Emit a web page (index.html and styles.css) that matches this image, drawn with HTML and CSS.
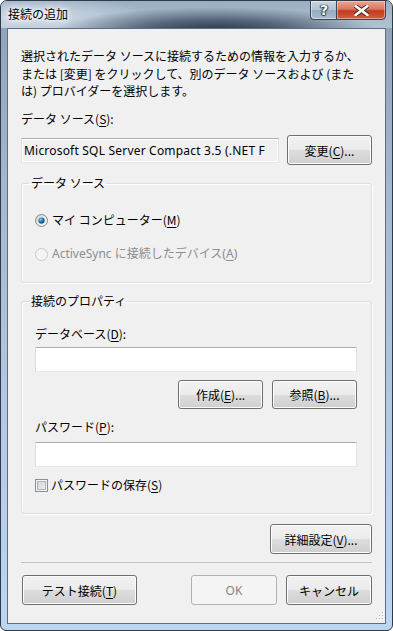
FILE: index.html
```html
<!DOCTYPE html>
<html lang="ja">
<head>
    <meta charset="UTF-8">
    <title>接続の追加</title>
    <link rel="stylesheet" href="styles.css">
</head>
<body>

<div class="window">
    <!-- タイトルバー -->
    <div class="titlebar">
        <span class="title">接続の追加</span>
        <div class="caption-btn help">?</div>
        <div class="caption-btn close">
            <svg width="15" height="11" viewBox="0 0 15 11">
                <path d="M1.5 1 L13.5 10 M13.5 1 L1.5 10" stroke="#3a2a26" stroke-width="4.4" stroke-linecap="round"/>
                <path d="M1.5 1 L13.5 10 M13.5 1 L1.5 10" stroke="#ffffff" stroke-width="2.6" stroke-linecap="round"/>
            </svg>
        </div>
    </div>

    <div class="client">
        <p class="desc">選択されたデータ ソースに接続するための情報を入力するか、<br>または [変更] をクリックして、別のデータ ソースおよび (また<br>は) プロバイダーを選択します。</p>

        <div class="label">データ ソース(<u>S</u>):</div>
        <div class="source-row">
            <div class="textbox readonly">Microsoft SQL Server Compact 3.5 (.NET F</div>
            <button class="btn btn-change">変更(<u>C</u>)...</button>
        </div>

        <fieldset class="group group-source">
            <legend>データ ソース</legend>
            <div class="option">
                <svg class="radio" width="13" height="13" viewBox="0 0 13 13">
                    <defs>
                        <linearGradient id="rfill" x1="0" y1="0" x2="1" y2="1">
                            <stop offset="0" stop-color="#cfd1d4"/>
                            <stop offset="1" stop-color="#fbfbfb"/>
                        </linearGradient>
                        <radialGradient id="rdot" cx="0.38" cy="0.35" r="0.7">
                            <stop offset="0" stop-color="#7fd3fa"/>
                            <stop offset="0.55" stop-color="#1e6eaa"/>
                            <stop offset="1" stop-color="#0b3762"/>
                        </radialGradient>
                    </defs>
                    <circle cx="6.5" cy="6.5" r="6" fill="url(#rfill)" stroke="#85898d"/>
                    <circle cx="6.5" cy="6.5" r="3.1" fill="url(#rdot)"/>
                </svg>
                <span>マイ コンピューター(<u>M</u>)</span>
            </div>
            <div class="option disabled">
                <svg class="radio" width="13" height="13" viewBox="0 0 13 13">
                    <circle cx="6.5" cy="6.5" r="6" fill="#f4f4f4" stroke="#c6c8ca"/>
                </svg>
                <span>ActiveSync に接続したデバイス(<u>A</u>)</span>
            </div>
        </fieldset>

        <fieldset class="group group-props">
            <legend>接続のプロパティ</legend>
            <div class="label first">データベース(<u>D</u>):</div>
            <div class="textbox"></div>
            <div class="file-btns">
                <button class="btn">作成(<u>E</u>)...</button>
                <button class="btn">参照(<u>B</u>)...</button>
            </div>
            <div class="label pw-label">パスワード(<u>P</u>):</div>
            <div class="textbox pw-box"></div>
            <div class="option check-row">
                <span class="checkbox"></span>
                <span>パスワードの保存(<u>S</u>)</span>
            </div>
        </fieldset>

        <div class="advanced">
            <button class="btn btn-advanced">詳細設定(<u>V</u>)...</button>
        </div>

        <div class="separator"></div>

        <div class="footer">
            <button class="btn btn-test">テスト接続(<u>T</u>)</button>
            <div class="footer-right">
                <button class="btn" disabled>OK</button>
                <button class="btn">キャンセル</button>
            </div>
        </div>

        <svg class="grip" width="10" height="10" viewBox="0 0 10 10">
            <g fill="#b9b9b9">
                <rect x="8" y="0" width="1" height="1"/>
                <rect x="5" y="3" width="1" height="1"/><rect x="8" y="3" width="1" height="1"/>
                <rect x="2" y="6" width="1" height="1"/><rect x="5" y="6" width="1" height="1"/><rect x="8" y="6" width="1" height="1"/>
            </g>
            <g fill="#ffffff">
                <rect x="9" y="1" width="1" height="1"/>
                <rect x="6" y="4" width="1" height="1"/><rect x="9" y="4" width="1" height="1"/>
                <rect x="3" y="7" width="1" height="1"/><rect x="6" y="7" width="1" height="1"/><rect x="9" y="7" width="1" height="1"/>
            </g>
        </svg>
    </div>
</div>

</body>
</html>
```

FILE: styles.css
```css
* {
    box-sizing: border-box;
}

body {
    margin: 0;
    background: #ffffff;
    font-family: "Noto Sans CJK JP", "Noto Sans", sans-serif;
    font-size: 12px;
    color: #000;
}

u {
    text-decoration: underline;
    text-underline-offset: 2px;
}

/* ウィンドウ枠 (Aero ガラス風) */
.window {
    width: 393px;
    height: 631px;
    border: 1px solid #2e3a4a;
    border-radius: 7px 7px 6px 6px;
    background: linear-gradient(to bottom, #8ea0b4 0%, #a4b8ce 30%, #b4cbe6 70%, #bcd5f0 100%);
    display: flex;
    flex-direction: column;
    overflow: hidden;
}

.titlebar {
    position: relative;
    height: 27px;
    flex: none;
    background:
        radial-gradient(ellipse 160px 24px at 215px 30px, #233349 0%, rgba(35, 51, 73, 0.65) 45%, rgba(35, 51, 73, 0) 100%),
        radial-gradient(ellipse 120px 22px at 30px 16px, #d2dce6 0%, rgba(210, 220, 230, 0) 100%),
        linear-gradient(to bottom, #98adc3 0%, #a9bbcd 60%, #b2c2d2 100%);
}

.title {
    position: absolute;
    left: 7px;
    top: 5px;
    line-height: 16px;
    color: #000;
    text-shadow: 0 0 6px #ffffff, 0 0 10px #ffffff, 0 0 3px #ffffff;
}

.caption-btn {
    position: absolute;
    top: -1px;
    height: 20px;
    border: 1px solid #3b4757;
    display: flex;
    align-items: center;
    justify-content: center;
}

.help {
    left: 309px;
    width: 27px;
    border-radius: 0 0 0 4px;
    border-right: none;
    background: linear-gradient(to bottom, #c9d5e2 0%, #b2c2d3 50%, #96abc1 51%, #a7bccf 100%);
    box-shadow: inset 0 0 0 1px rgba(255, 255, 255, 0.45);
    color: #fff;
    font-family: "DejaVu Sans", sans-serif;
    font-weight: bold;
    font-size: 14px;
    text-shadow: 0 0 1px #333, 1px 0 1px #333, -1px 0 1px #333, 0 1px 1px #333;
}

.close {
    left: 335px;
    width: 50px;
    border-radius: 0 0 4px 0;
    background: linear-gradient(to bottom, #e8a898 0%, #d9775f 45%, #c2391e 55%, #d45f3e 100%);
    box-shadow: inset 0 0 0 1px rgba(255, 220, 210, 0.5);
}

/* クライアント領域 */
.client {
    position: relative;
    margin: 0 6px 6px;
    flex: 1;
    border: 1px solid #5e6e82;
    background: #f0f0f0;
    padding: 18px 13px 0 13px;
    display: flex;
    flex-direction: column;
}

.desc {
    margin: 0;
    line-height: 17.5px;
    white-space: nowrap;
}

.label {
    line-height: 18px;
    margin-top: 10.5px;
}

.source-row {
    margin-top: 7px;
    display: flex;
    align-items: center;
    gap: 8px;
}

.textbox {
    height: 25px;
    background: #ffffff;
    border: 1px solid #abadb3;
    border-color: #abadb3 #e2e3ea #e3e9ef #dbdfe6;
}

.textbox.readonly {
    flex: 1;
    min-width: 0;
    background: #f0f0f0;
    box-shadow: inset 0 0 0 1px #ffffff;
    padding: 0 2px;
    line-height: 23px;
    white-space: nowrap;
    overflow: hidden;
    font-family: "Noto Sans", "Noto Sans CJK JP", sans-serif;
    font-size: 12px;
    letter-spacing: 0.2px;
}

.btn {
    height: 30px;
    width: 85px;
    padding: 0;
    font: inherit;
    color: #000;
    border: 1px solid #707070;
    border-radius: 3px;
    background: linear-gradient(to bottom, #f2f2f2 0%, #ebebeb 50%, #dddddd 51%, #cfcfcf 100%);
    box-shadow: inset 0 0 0 1px #fcfcfc;
}

.btn[disabled] {
    color: #838383;
    border-color: #adb2b5;
    background: #f4f4f4;
    box-shadow: none;
    font-family: "Noto Sans", sans-serif;
}

.btn-change {
    flex: none;
}

/* グループボックス */
.group {
    margin: 0;
    border: 1px solid #d5dfe5;
    border-radius: 3px;
    box-shadow: inset 1px 1px 0 #ffffff, 1px 1px 0 #ffffff;
    padding: 0 14px 19px 13px;
    min-width: 0;
}

.group legend {
    margin-left: -6px;
    padding: 0 2px;
    line-height: 18px;
}

.group-source {
    margin-top: 9px;
    padding-bottom: 19px;
}

.option {
    display: flex;
    align-items: center;
    gap: 4px;
    line-height: 18px;
}

.group-source .option {
    margin-top: 16px;
}

.group-source .option:first-of-type {
    margin-top: 19px;
}

.option.disabled {
    color: #8d8d8d;
}

.option.disabled span {
    font-family: "Noto Sans", "Noto Sans CJK JP", sans-serif;
}

.radio {
    flex: none;
}

.group-props {
    margin-top: 9px;
}

.group-props .label.first {
    margin-top: 15px;
}

.group-props .textbox {
    margin-top: 4px;
}

.file-btns {
    margin-top: 8px;
    display: flex;
    justify-content: flex-end;
    gap: 9px;
}

.file-btns .btn {
    height: 29px;
}

.pw-label {
    margin-top: 9px;
}

.group-props .pw-box {
    margin-top: 6px;
}

.check-row {
    margin-top: 9px;
    gap: 3px;
}

.checkbox {
    flex: none;
    width: 13px;
    height: 13px;
    border: 1px solid #8e8f8f;
    background: #f4f4f4;
    box-shadow: inset 0 0 0 1px #f4f4f4, inset 0 0 0 2px #aeb3b9;
    background-image: linear-gradient(135deg, #cbcfd5 0%, #f4f4f4 100%);
}

.advanced {
    margin-top: 10px;
    display: flex;
    justify-content: flex-end;
}

.btn-advanced {
    width: 102px;
}

.separator {
    margin-top: 8px;
    height: 1px;
    background: #c4c4c4;
}

.footer {
    margin-top: 12px;
    display: flex;
    justify-content: space-between;
}

.btn-test {
    width: 115px;
    margin-left: 1px;
}

.footer-right {
    display: flex;
    gap: 9px;
}

.footer-right .btn {
    width: 86px;
}

.grip {
    position: absolute;
    right: 1px;
    bottom: 1px;
}
```
